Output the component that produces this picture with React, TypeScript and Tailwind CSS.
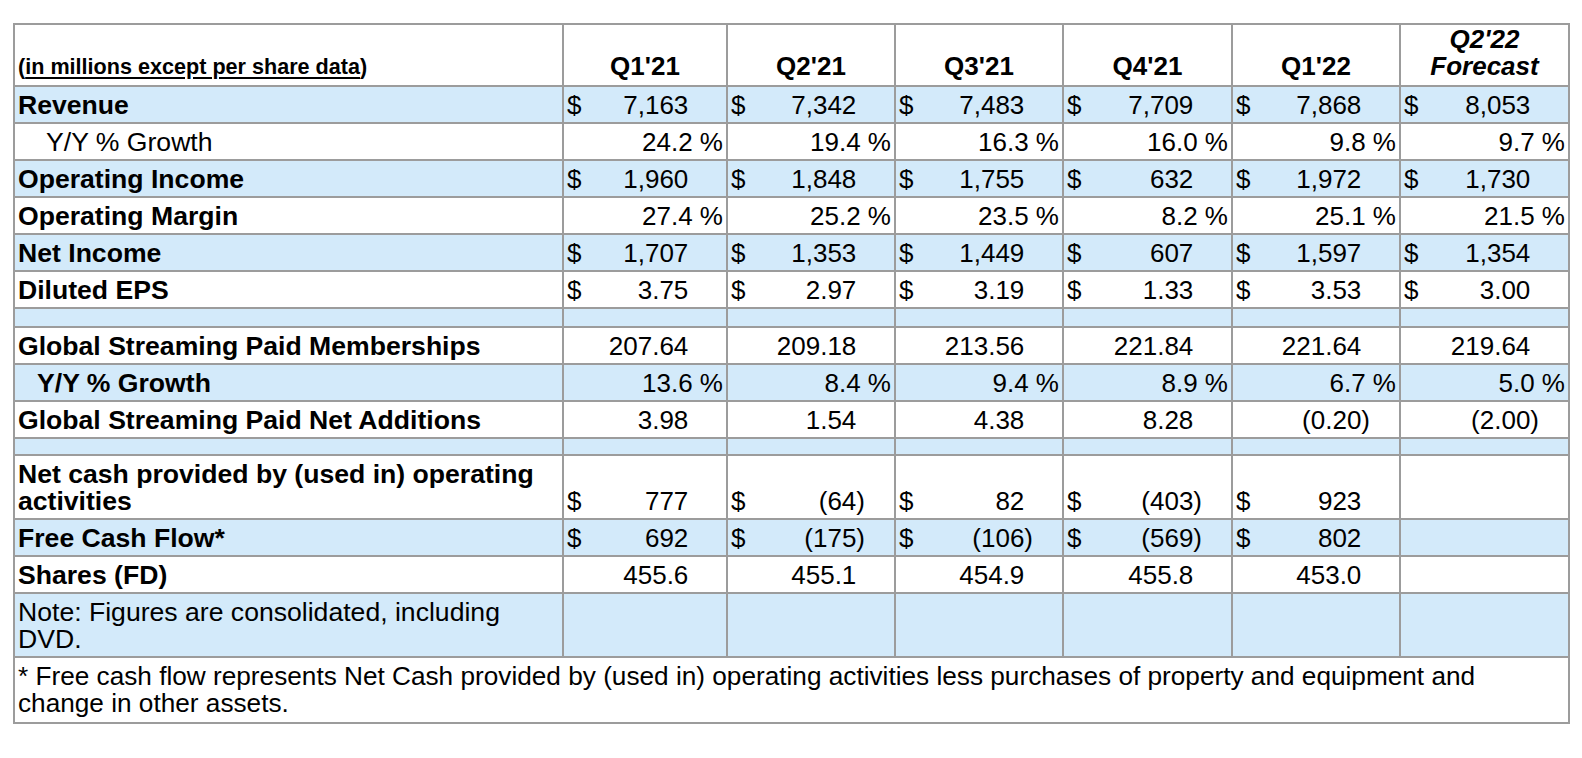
import type { ReactNode } from "react";

type Kind = "usd" | "pct" | "num";

type Row =
  | { type: "data"; label: ReactNode; kind: Kind; vals: string[]; blue: boolean; labelClass: string }
  | { type: "blank"; blue: boolean; h: string }
  | { type: "note"; label: ReactNode; blue: boolean };

const rows: Row[] = [
  { type: "data", label: "Revenue", kind: "usd", vals: ["7,163", "7,342", "7,483", "7,709", "7,868", "8,053"], blue: true, labelClass: "font-bold" },
  { type: "data", label: "Y/Y % Growth", kind: "pct", vals: ["24.2 %", "19.4 %", "16.3 %", "16.0 %", "9.8 %", "9.7 %"], blue: false, labelClass: "pl-[31px]" },
  { type: "data", label: "Operating Income", kind: "usd", vals: ["1,960", "1,848", "1,755", "632", "1,972", "1,730"], blue: true, labelClass: "font-bold" },
  { type: "data", label: "Operating Margin", kind: "pct", vals: ["27.4 %", "25.2 %", "23.5 %", "8.2 %", "25.1 %", "21.5 %"], blue: false, labelClass: "font-bold" },
  { type: "data", label: "Net Income", kind: "usd", vals: ["1,707", "1,353", "1,449", "607", "1,597", "1,354"], blue: true, labelClass: "font-bold" },
  { type: "data", label: "Diluted EPS", kind: "usd", vals: ["3.75", "2.97", "3.19", "1.33", "3.53", "3.00"], blue: false, labelClass: "font-bold" },
  { type: "blank", blue: true, h: "h-[17px]" },
  { type: "data", label: "Global Streaming Paid Memberships", kind: "num", vals: ["207.64", "209.18", "213.56", "221.84", "221.64", "219.64"], blue: false, labelClass: "font-bold" },
  { type: "data", label: "Y/Y % Growth", kind: "pct", vals: ["13.6 %", "8.4 %", "9.4 %", "8.9 %", "6.7 %", "5.0 %"], blue: true, labelClass: "font-bold pl-[22px]" },
  { type: "data", label: "Global Streaming Paid Net Additions", kind: "num", vals: ["3.98", "1.54", "4.38", "8.28", "(0.20)", "(2.00)"], blue: false, labelClass: "font-bold" },
  { type: "blank", blue: true, h: "h-[15px]" },
  {
    type: "data",
    label: (
      <>
        Net cash provided by (used in) operating
        <br />
        activities
      </>
    ),
    kind: "usd",
    vals: ["777", "(64)", "82", "(403)", "923", ""],
    blue: false,
    labelClass: "font-bold",
  },
  { type: "data", label: "Free Cash Flow*", kind: "usd", vals: ["692", "(175)", "(106)", "(569)", "802", ""], blue: true, labelClass: "font-bold" },
  { type: "data", label: "Shares (FD)", kind: "num", vals: ["455.6", "455.1", "454.9", "455.8", "453.0", ""], blue: false, labelClass: "font-bold" },
  {
    type: "note",
    label: (
      <>
        Note: Figures are consolidated, including
        <br />
        DVD.
      </>
    ),
    blue: true,
  },
];

const headers = ["Q1'21", "Q2'21", "Q3'21", "Q4'21", "Q1'22"];

const td = "border-2 border-[#9c9c9c] px-[3px] pt-[5px] pb-[3px] align-bottom";

function Value({ kind, v }: { kind: Kind; v: string }) {
  if (!v) return null;
  if (kind === "pct") return <div className="text-right">{v}</div>;
  const neg = v.startsWith("(");
  return (
    <div className="flex items-end justify-between pr-[26px]">
      <span>{kind === "usd" ? "$" : ""}</span>
      <span>
        {v}
        {!neg && <span className="invisible">)</span>}
      </span>
    </div>
  );
}

export default function App() {
  return (
    <div className="min-h-screen bg-white pl-[13px] pt-[23px] font-['Liberation_Sans',Arial,sans-serif] text-[26px] leading-[27px] text-black">
      <table className="w-[1555px] table-fixed border-collapse border-2 border-[#9c9c9c]">
        <colgroup>
          <col className="w-[549px]" />
          <col className="w-[164px]" />
          <col className="w-[168px]" />
          <col className="w-[168px]" />
          <col className="w-[169px]" />
          <col className="w-[168px]" />
          <col className="w-[169px]" />
        </colgroup>
        <thead>
          <tr className="bg-white">
            <th className="border-2 border-[#9c9c9c] px-[3px] pt-[1px] pb-[5px] text-left align-bottom text-[21.6px] font-bold">
              (<u className="underline-offset-[3px]">in millions except per share data</u>)
            </th>
            {headers.map((h) => (
              <th key={h} className="border-2 border-[#9c9c9c] px-[3px] pt-[1px] pb-[5px] text-center align-bottom font-bold">
                {h}
              </th>
            ))}
            <th className="border-2 border-[#9c9c9c] px-[3px] pt-[1px] pb-[5px] text-center align-bottom font-bold italic">
              Q2'22
              <br />
              Forecast
            </th>
          </tr>
        </thead>
        <tbody>
          {rows.map((r, i) => {
            const bg = r.blue ? "bg-[#d3eafa]" : "bg-white";
            if (r.type === "blank") {
              return (
                <tr key={i} className={bg}>
                  {Array.from({ length: 7 }).map((_, j) => (
                    <td key={j} className="border-2 border-[#9c9c9c] p-0">
                      <div className={r.h} />
                    </td>
                  ))}
                </tr>
              );
            }
            if (r.type === "note") {
              return (
                <tr key={i} className={bg}>
                  <td className={`${td} text-[26.6px]`}>{r.label}</td>
                  {Array.from({ length: 6 }).map((_, j) => (
                    <td key={j} className={td} />
                  ))}
                </tr>
              );
            }
            return (
              <tr key={i} className={bg}>
                <td className={`${td} text-[26.6px] ${r.labelClass}`}>{r.label}</td>
                {r.vals.map((v, j) => (
                  <td key={j} className={td}>
                    <Value kind={r.kind} v={v} />
                  </td>
                ))}
              </tr>
            );
          })}
          <tr className="bg-white">
            <td colSpan={7} className="border-2 border-[#9c9c9c] px-[3px] pt-[5px] pb-[5px] align-bottom text-[26.2px]">
              * Free cash flow represents Net Cash provided by (used in) operating activities less purchases of property and equipment and
              <br />
              change in other assets.
            </td>
          </tr>
        </tbody>
      </table>
    </div>
  );
}
